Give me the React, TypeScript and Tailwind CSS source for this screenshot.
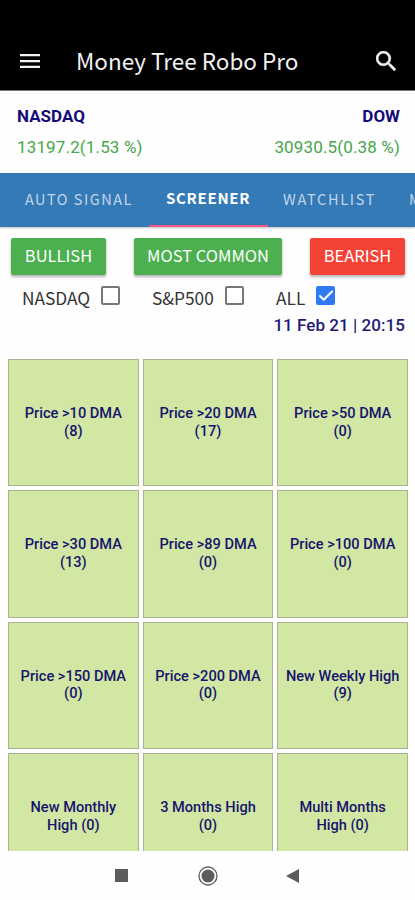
import { Check } from "lucide-react";

const screeners = [
  { name: "Price >10 DMA", count: 8 },
  { name: "Price >20 DMA", count: 17 },
  { name: "Price >50 DMA", count: 0 },
  { name: "Price >30 DMA", count: 13 },
  { name: "Price >89 DMA", count: 0 },
  { name: "Price >100 DMA", count: 0 },
  { name: "Price >150 DMA", count: 0 },
  { name: "Price >200 DMA", count: 0 },
  { name: "New Weekly High", count: 9 },
  { name: "New Monthly High", count: 0 },
  { name: "3 Months High", count: 0 },
  { name: "Multi Months High", count: 0 },
];

function Header() {
  return (
    <header className="flex h-[91px] shrink-0 items-center border-b border-[#777] bg-black pt-[32px] pr-[19px] pl-[20px] text-[#f1f1f1]">
      <svg width="20" height="14" viewBox="0 0 20 14" fill="currentColor">
        <path d="M0 0h20v2.3H0zM0 5.9h20v2.3H0zM0 11.7h20V14H0z" />
      </svg>
      <h1 className="ml-[36px] flex-1 pb-[2px] text-[22.5px] leading-[30px] whitespace-nowrap">
        Money Tree Robo Pro
      </h1>
      <svg width="20" height="20" viewBox="3 3 17.5 17.5" fill="currentColor" stroke="currentColor" strokeWidth="0.4">
        <path d="M15.5 14h-.79l-.28-.27A6.47 6.47 0 0 0 16 9.5 6.5 6.5 0 1 0 9.5 16c1.61 0 3.09-.59 4.23-1.57l.27.28v.79l5 4.99L20.49 19l-4.99-5zm-6 0C7.01 14 5 11.99 5 9.5S7.01 5 9.5 5 14 7.01 14 9.5 11.99 14 9.5 14z" />
      </svg>
    </header>
  );
}

function Checkbox({ checked = false }: { checked?: boolean }) {
  return checked ? (
    <span className="flex size-[19px] items-center justify-center rounded-[2px] bg-[#2f7af5] text-white">
      <Check size={18} strokeWidth={2.8} />
    </span>
  ) : (
    <span className="size-[19px] rounded-[2px] border-2 border-[#777] bg-white" />
  );
}

export default function App() {
  return (
    <div className="flex h-[900px] w-[415px] flex-col overflow-hidden bg-[#fefefe] font-['Noto_Sans_CJK_SC',sans-serif]">
      <Header />

      {/* Index quotes */}
      <div className="flex h-[82px] shrink-0 justify-between pt-[14px] pr-[15px] pl-[17px] font-['Roboto',sans-serif] text-[17px] leading-[22px]">
        <div>
          <p className="font-bold text-[#130c76]">NASDAQ</p>
          <p className="mt-[9px] tracking-[0.15px] text-[#47a64b]">13197.2(1.53 %)</p>
        </div>
        <div className="text-right">
          <p className="font-bold text-[#130c76]">DOW</p>
          <p className="mt-[9px] tracking-[0.15px] text-[#47a64b]">30930.5(0.38 %)</p>
        </div>
      </div>

      {/* Tabs */}
      <nav className="flex h-[54px] shrink-0 overflow-hidden bg-[#337ab7] text-[14.5px] leading-[52px] tracking-[1.5px] whitespace-nowrap text-[#c3d5e8] shadow-[0_1px_2px_rgba(0,0,0,0.25)]">
        <span className="w-[149px] shrink-0 pl-[25px]">AUTO SIGNAL</span>
        <span className="w-[119px] shrink-0 border-b-2 border-[#f0598a] pl-[17px] text-[15px] leading-[50px] font-bold tracking-[0.7px] text-white">
          SCREENER
        </span>
        <span className="w-[141px] shrink-0 pl-[15px] tracking-[1.7px]">WATCHLIST</span>
        <span className="shrink-0">M</span>
      </nav>

      {/* Signal filters */}
      <div className="mt-[11px] flex h-[37px] shrink-0 justify-between pr-[10px] pl-[11px] text-[16.5px] leading-[35px] whitespace-nowrap text-white">
        <button className="w-[95px] rounded-[2px] bg-[#4caf50] pb-[2px] shadow-[0_2px_3px_rgba(0,0,0,0.3)]">BULLISH</button>
        <button className="w-[148px] rounded-[2px] bg-[#4caf50] pb-[2px] shadow-[0_2px_3px_rgba(0,0,0,0.3)]">MOST COMMON</button>
        <button className="w-[95px] rounded-[2px] bg-[#f44336] pb-[2px] shadow-[0_2px_3px_rgba(0,0,0,0.3)]">BEARISH</button>
      </div>

      <div className="mt-[11px] flex h-[24px] shrink-0 pl-[22px] text-[17.3px] leading-[24px] text-[#333]">
        <label className="flex w-[130px] gap-[11px]">NASDAQ <Checkbox /></label>
        <label className="flex w-[124px] gap-[11px]">S&amp;P500 <Checkbox /></label>
        <label className="flex gap-[11px]">ALL <Checkbox checked /></label>
      </div>

      <p className="mt-[5px] h-[44px] shrink-0 pr-[10px] text-right font-['Roboto',sans-serif] text-[17px] leading-[20px] font-medium tracking-[0.05px] text-[#221a72]">
        11 Feb 21 | 20:15
      </p>

      {/* Screener tiles, the last row runs under the system bar */}
      <main className="grid h-[492px] shrink-0 auto-rows-[127.3px] grid-cols-3 gap-[4px] overflow-hidden pr-[7px] pl-[8px] font-['Roboto',sans-serif]">
        {screeners.map((s) => (
          <div
            key={s.name}
            className="flex items-center justify-center border border-[#a9b394] bg-[#d1e7a3] text-center text-[14.6px] leading-[17.6px] font-medium text-[#17146e]"
          >
            <p className="w-[116px]">{`${s.name} (${s.count})`}</p>
          </div>
        ))}
      </main>

      {/* System bar */}
      <footer className="flex h-[49px] shrink-0 items-center pl-[115px] text-[#5c5c5c]">
        <span className="size-[13px] bg-current" />
        <svg className="ml-[70px]" width="20" height="20" viewBox="0 0 20 20" fill="none">
          <circle cx="10" cy="10" r="9" stroke="currentColor" strokeWidth="1.3" />
          <circle cx="10" cy="10" r="6.5" fill="currentColor" />
        </svg>
        <svg className="ml-[68px]" width="13" height="14" viewBox="0 0 13 14" fill="currentColor">
          <path d="M13 0v14L0 7z" />
        </svg>
      </footer>
    </div>
  );
}
